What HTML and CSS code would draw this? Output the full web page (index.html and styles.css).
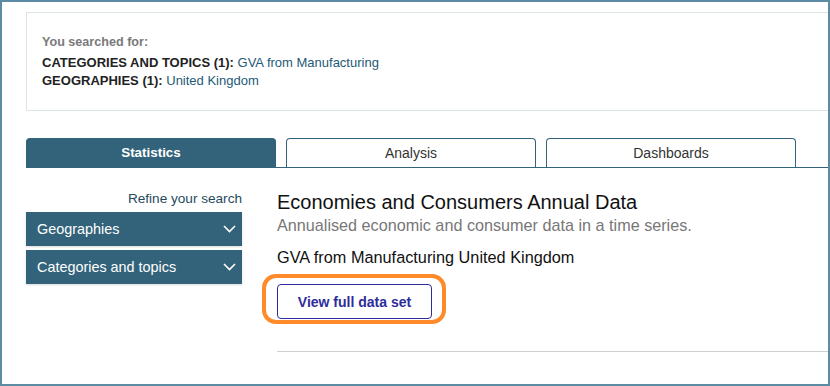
FILE: index.html
```html
<!DOCTYPE html>
<html>
<head>
<meta charset="utf-8">
<link rel="stylesheet" href="styles.css">
</head>
<body>
<div class="frame">
  <div class="page">
    <div class="search-box">
      <div class="searched-label">You searched for:</div>
      <div class="crit"><b>CATEGORIES AND TOPICS (1):</b> <span class="val">GVA from Manufacturing</span></div>
      <div class="crit"><b>GEOGRAPHIES (1):</b> <span class="val">United Kingdom</span></div>
    </div>
    <div class="tabs">
      <div class="tab active">Statistics</div>
      <div class="tab">Analysis</div>
      <div class="tab">Dashboards</div>
    </div>
    <div class="body">
      <aside class="side">
        <div class="refine">Refine your search</div>
        <div class="facet">Geographies
          <svg class="chev" width="13" height="8" viewBox="0 0 13 8"><path d="M1 1 L6.5 6.5 L12 1" fill="none" stroke="#fff" stroke-width="1.6"/></svg>
        </div>
        <div class="facet">Categories and topics
          <svg class="chev" width="13" height="8" viewBox="0 0 13 8"><path d="M1 1 L6.5 6.5 L12 1" fill="none" stroke="#fff" stroke-width="1.6"/></svg>
        </div>
      </aside>
      <main class="main">
        <h1 class="title">Economies and Consumers Annual Data</h1>
        <p class="sub">Annualised economic and consumer data in a time series.</p>
        <p class="result">GVA from Manufacturing United Kingdom</p>
        <div class="btn-wrap">
          <button class="btn">View full data set</button>
          <span class="ring"></span>
        </div>
        <hr class="rule">
      </main>
    </div>
  </div>
</div>
</body>
</html>
```
FILE: styles.css
```css
html, body { margin: 0; padding: 0; background: #fff; }
body { font-family: "Liberation Sans", Arial, sans-serif; color: #222; }
.frame {
  width: 830px; height: 386px; box-sizing: border-box;
  border: 2px solid #5b8ca3; overflow: hidden; position: relative;
}
.page { width: 900px; padding: 10px 0 0 24px; box-sizing: border-box; }
.search-box {
  border: 1px solid #dde4e7; height: 99px; box-sizing: border-box;
  padding: 22px 0 0 15px;
}
.searched-label { font-size: 12.6px; font-weight: bold; color: #7a7a7a; margin-bottom: 5px; }
.crit { font-size: 13px; line-height: 18px; color: #222; }
.crit b { font-weight: bold; color: #222; }
.crit .val { color: #1e5a76; }
.tabs {
  margin-top: 27px; display: flex; gap: 10px;
  border-bottom: 1px solid #33637b; height: 29px;
}
.tab {
  width: 250px; box-sizing: border-box; height: 29px;
  border: 1px solid #33637b; border-bottom: none; border-radius: 4px 4px 0 0;
  font-size: 14px; color: #333; text-align: center; line-height: 28px;
}
.tab.active { background: #33637b; color: #fff; font-weight: bold; font-size: 13.4px; }
.body { display: flex; gap: 35px; padding-top: 22px; }
.side { width: 216px; padding-top: 1px; }
.refine { text-align: right; font-size: 13.6px; color: #1f4b60; margin-bottom: 6px; }
.facet {
  background: #33637b; color: #fff; font-size: 14.4px; height: 34px;
  display: flex; align-items: center; justify-content: space-between;
  padding: 0 6px 0 11px; margin-bottom: 4px; box-shadow: 0 1px 2px rgba(0,0,0,0.15);
}
.chev { display: block; }
.main { flex: 1; }
.title { font-size: 20px; font-weight: normal; color: #111; margin: 0 0 1px; line-height: 24px; }
.sub { font-size: 16.2px; color: #777; margin: 0 0 12px; line-height: 20px; }
.result { font-size: 16.3px; color: #111; margin: 0 0 17px; line-height: 20px; }
.btn-wrap { position: relative; display: inline-block; vertical-align: top; }
.btn {
  display: block; width: 155px; height: 35px; box-sizing: border-box;
  border: 1px solid #2b2b9e; border-radius: 4px; background: #fff;
  font-family: inherit; font-size: 14px; font-weight: bold; color: #2d2d9a; padding: 0;
}
.ring {
  position: absolute; left: -15px; top: -10px; right: -14px; bottom: -5px;
  border: 4px solid #ff8a2a; border-radius: 14px;
}
.rule { border: none; border-top: 1px solid #cfcfcf; margin: 32px 0 0; }
```
